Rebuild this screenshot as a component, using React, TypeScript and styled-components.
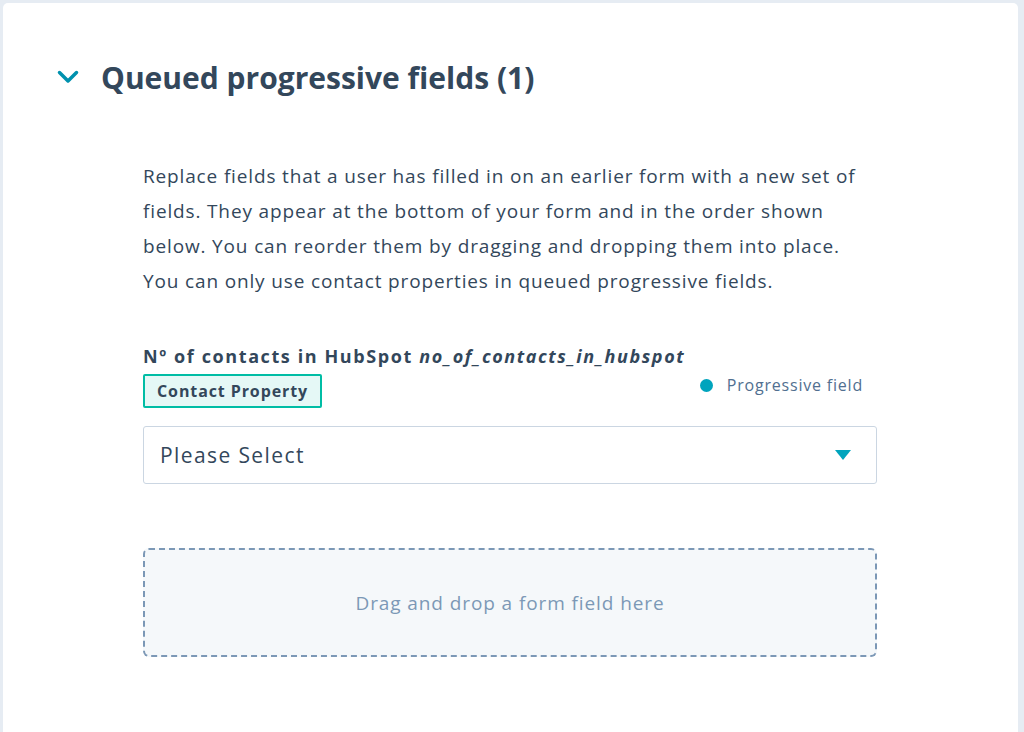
import styled, { createGlobalStyle } from "styled-components";

const GlobalStyle = createGlobalStyle`
  html, body {
    margin: 0;
    padding: 0;
    background: #e6ecf3;
    font-family: "Open Sans", "Liberation Sans", sans-serif;
    color: #33475b;
  }
`;

const Page = styled.div`
  padding: 3px 6px 0 3px;
  height: 732px;
  box-sizing: border-box;
  overflow: hidden;
`;

const Card = styled.div`
  background: #fff;
  border-radius: 5px 5px 0 0;
  height: 760px;
  padding: 54px 0 0 54px;
  box-sizing: border-box;
`;

const Header = styled.div`
  display: flex;
  align-items: center;
  gap: 22px;
  height: 40px;
`;

const Chevron = styled.svg`
  width: 22px;
  height: 14px;
  flex-shrink: 0;
`;

const Heading = styled.h2`
  margin: 0;
  font-size: 30px;
  font-weight: 700;
  color: #33475b;
`;

const Body = styled.div`
  margin: 62px 0 0 86px;
  width: 734px;
`;

const Description = styled.p`
  margin: 0;
  font-size: 19px;
  line-height: 35px;
  letter-spacing: 0.85px;
  color: #33475b;
  white-space: nowrap;
`;

const FieldLabel = styled.div`
  margin-top: 46px;
  font-size: 18px;
  font-weight: 700;
  line-height: 22px;
  letter-spacing: 1.6px;
  color: #33475b;

  em {
    font-style: italic;
  }
`;

const TagRow = styled.div`
  display: flex;
  align-items: center;
  justify-content: space-between;
  margin-top: 7px;
  padding-right: 14px;
`;

const Tag = styled.span`
  display: inline-flex;
  align-items: center;
  height: 34px;
  padding: 0 12px;
  box-sizing: border-box;
  background: #e5f8f6;
  border: 2px solid #00bda5;
  border-radius: 2px;
  font-size: 16px;
  font-weight: 700;
  letter-spacing: 0.9px;
  color: #33475b;
`;

const Indicator = styled.span`
  display: inline-flex;
  align-items: center;
  gap: 14px;
  margin-bottom: 12px;
  font-size: 16px;
  letter-spacing: 0.8px;
  color: #516f90;
`;

const Dot = styled.span`
  width: 13px;
  height: 13px;
  border-radius: 50%;
  background: #00a4bd;
`;

const Select = styled.div`
  display: flex;
  align-items: center;
  justify-content: space-between;
  margin-top: 18px;
  height: 58px;
  box-sizing: border-box;
  padding: 0 25px 0 16px;
  border: 1px solid #cbd6e2;
  border-radius: 3px;
  background: #fff;
  font-size: 21px;
  letter-spacing: 1.4px;
  color: #33475b;
`;

const Caret = styled.svg`
  width: 16px;
  height: 10px;
`;

const DropZone = styled.div`
  display: flex;
  align-items: center;
  justify-content: center;
  margin-top: 64px;
  height: 109px;
  box-sizing: border-box;
  border: 2px dashed #7c98b6;
  border-radius: 6px;
  background: #f5f8fa;
  font-size: 19px;
  letter-spacing: 0.9px;
  color: #7c98b6;
`;

export default function App() {
  return (
    <>
      <GlobalStyle />
      <Page>
        <Card>
          <Header>
            <Chevron viewBox="0 0 22 14">
              <path
                d="M2.5 2.5 L11 11 L19.5 2.5"
                fill="none"
                stroke="#0091ae"
                strokeWidth="3.5"
                strokeLinecap="round"
                strokeLinejoin="round"
              />
            </Chevron>
            <Heading>Queued progressive fields (1)</Heading>
          </Header>
          <Body>
            <Description>
              Replace fields that a user has filled in on an earlier form with a new set of
              <br />
              fields. They appear at the bottom of your form and in the order shown
              <br />
              below. You can reorder them by dragging and dropping them into place.
              <br />
              You can only use contact properties in queued progressive fields.
            </Description>
            <FieldLabel>
              Nº of contacts in HubSpot <em>no_of_contacts_in_hubspot</em>
            </FieldLabel>
            <TagRow>
              <Tag>Contact Property</Tag>
              <Indicator>
                <Dot />
                Progressive field
              </Indicator>
            </TagRow>
            <Select>
              Please Select
              <Caret viewBox="0 0 16 10">
                <path d="M0 0 L16 0 L8 10 Z" fill="#00a4bd" />
              </Caret>
            </Select>
            <DropZone>Drag and drop a form field here</DropZone>
          </Body>
        </Card>
      </Page>
    </>
  );
}
